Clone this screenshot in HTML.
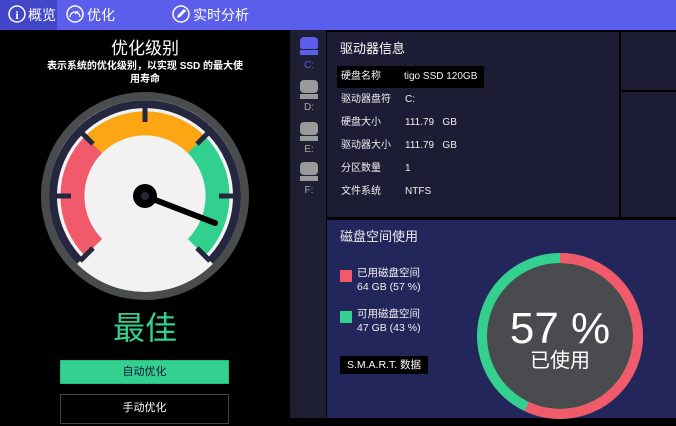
<!DOCTYPE html>
<html><head><meta charset="utf-8"><style>
*{margin:0;padding:0;box-sizing:border-box}
body{width:676px;height:418px;overflow:hidden;background:#000;font-family:"Liberation Sans","Noto Sans CJK SC",sans-serif;color:#fff;position:relative}
.a{position:absolute;white-space:nowrap}
.top{left:0;top:0;width:676px;height:30px;background:#5a5eea}
.nav{font-size:14px;top:6px;line-height:18px}
.lbl{font-size:10px;color:#f0f0f0;line-height:14px}
</style></head><body>
<div class="a top"></div>
<div class="a" style="left:0;top:0;width:57px;height:30px;background:#4246c8"></div>
<svg class="a" style="left:0;top:0" width="300" height="30">
<g fill="none" stroke="#fff" stroke-width="1.5">
<circle cx="17" cy="14" r="8"/><circle cx="75" cy="14" r="8"/><circle cx="181" cy="14" r="8"/></g>
<text x="17" y="19" fill="#fff" font-size="12" font-weight="bold" text-anchor="middle" font-family="Liberation Serif">i</text>
<path d="M70 17 A5 5 0 0 1 80 17 M75 14 L78 11" stroke="#fff" stroke-width="1.3" fill="none"/>
<path d="M177 18 L178 15 L184 9 L186 11 L180 17 Z" fill="#fff"/>
</svg>
<div class="a nav" style="left:28px">概览</div>
<div class="a nav" style="left:87px">优化</div>
<div class="a nav" style="left:193px">实时分析</div>

<div class="a" style="left:0;top:38px;width:290px;text-align:center;font-size:17px;line-height:22px">优化级别</div>
<div class="a" style="left:45px;top:60px;width:200px;text-align:center;font-size:10px;font-weight:bold;white-space:normal;line-height:13px">表示系统的优化级别，以实现 SSD 的最大使用寿命</div>

<svg class="a" style="left:0;top:0" width="290" height="418">
<circle cx="145" cy="196" r="104" fill="#4a4b4d"/>
<circle cx="145" cy="196" r="96" fill="#f2f2f2"/>
<g fill="none">
<path d="M79.9 261.1 A92 92 0 1 1 210.1 261.1" stroke="#25273f" stroke-width="8"/>
<path d="M93.6 247.4 A73 73 0 0 1 93.6 144.6" stroke="#f05a6a" stroke-width="24"/>
<path d="M93.6 144.6 A73 73 0 0 1 196.4 144.6" stroke="#fca613" stroke-width="24"/>
<path d="M196.4 144.6 A73 73 0 0 1 196.4 247.4" stroke="#32d08f" stroke-width="24"/>
</g>
<g stroke="#25273f" stroke-width="5">
<line x1="145" y1="104" x2="145" y2="122"/>
<line x1="80" y1="131" x2="93" y2="144"/>
<line x1="210" y1="131" x2="197" y2="144"/>
<line x1="53" y1="196" x2="71" y2="196"/>
<line x1="237" y1="196" x2="219" y2="196"/>
<line x1="80" y1="261" x2="93" y2="248"/>
<line x1="210" y1="261" x2="197" y2="248"/>
</g>
<line x1="145" y1="196" x2="215" y2="223" stroke="#000" stroke-width="6" stroke-linecap="round"/>
<circle cx="145" cy="196" r="12" fill="#000"/>
<circle cx="145" cy="196" r="4" fill="#25273f"/>
</svg>
<div class="a" style="left:0;top:307px;width:290px;text-align:center;font-size:32px;line-height:42px;color:#33d08f">最佳</div>
<div class="a" style="left:60px;top:360px;width:169px;height:24px;background:#33d08f;border:1px dotted #1a6;color:#113;font-size:11px;text-align:center;line-height:22px">自动优化</div>
<div class="a" style="left:60px;top:394px;width:169px;height:30px;background:#000;border:1px solid #444;font-size:11px;text-align:center;line-height:26px">手动优化</div>

<div class="a" style="left:290px;top:30px;width:36px;height:388px;background:#1e1f33"></div>
<svg class="a" style="left:290px;top:30px" width="36" height="180">
<g fill="#5a5eea"><rect x="10" y="7" width="18" height="13" rx="4"/><rect x="10" y="19" width="18" height="6"/></g>
<line x1="10" y1="19.5" x2="28" y2="19.5" stroke="#1e1f33"/>
<g fill="#9a9a9a"><rect x="10" y="50" width="18" height="13" rx="4"/><rect x="10" y="63" width="18" height="6"/>
<rect x="10" y="92" width="18" height="13" rx="4"/><rect x="10" y="105" width="18" height="6"/>
<rect x="10" y="132" width="18" height="13" rx="4"/><rect x="10" y="145" width="18" height="6"/></g>
<g stroke="#1e1f33"><line x1="10" y1="63.5" x2="28" y2="63.5"/><line x1="10" y1="105.5" x2="28" y2="105.5"/><line x1="10" y1="145.5" x2="28" y2="145.5"/></g>
<text x="19" y="38" font-size="10" fill="#5a5eea" text-anchor="middle">C:</text>
<text x="19" y="80" font-size="10" fill="#aaa" text-anchor="middle">D:</text>
<text x="19" y="122" font-size="10" fill="#aaa" text-anchor="middle">E:</text>
<text x="19" y="163" font-size="10" fill="#aaa" text-anchor="middle">F:</text>
</svg>

<div class="a" style="left:327px;top:32px;width:292px;height:185px;background:#1c1d35"></div>
<div class="a" style="left:621px;top:32px;width:55px;height:58px;background:#1c1d35"></div>
<div class="a" style="left:621px;top:92px;width:55px;height:125px;background:#1c1d35"></div>
<div class="a" style="left:340px;top:40px;font-size:13px;line-height:18px">驱动器信息</div>
<div class="a" style="left:337px;top:66px;width:147px;height:22px;background:#000"></div>
<div class="a lbl" style="left:341px;top:70px">硬盘名称</div><div class="a lbl" style="left:404px;top:70px">tigo SSD 120GB</div>
<div class="a lbl" style="left:341px;top:93px">驱动器盘符</div><div class="a lbl" style="left:405px;top:93px">C:</div>
<div class="a lbl" style="left:341px;top:116px">硬盘大小</div><div class="a lbl" style="left:405px;top:116px">111.79&nbsp;&nbsp;&nbsp;GB</div>
<div class="a lbl" style="left:341px;top:139px">驱动器大小</div><div class="a lbl" style="left:405px;top:139px">111.79&nbsp;&nbsp;&nbsp;GB</div>
<div class="a lbl" style="left:341px;top:162px">分区数量</div><div class="a lbl" style="left:405px;top:162px">1</div>
<div class="a lbl" style="left:341px;top:185px">文件系统</div><div class="a lbl" style="left:405px;top:185px">NTFS</div>

<div class="a" style="left:327px;top:220px;width:349px;height:198px;background:#23265a"></div>
<div class="a" style="left:340px;top:228px;font-size:13px;line-height:18px;color:#eee">磁盘空间使用</div>
<div class="a" style="left:340px;top:270px;width:12px;height:12px;background:#f05a6a"></div>
<div class="a lbl" style="left:357px;top:266px;line-height:14px;font-size:10.5px">已用磁盘空间<br>64 GB (57 %)</div>
<div class="a" style="left:340px;top:311px;width:12px;height:12px;background:#33d08f"></div>
<div class="a lbl" style="left:357px;top:307px;line-height:14px;font-size:10.5px">可用磁盘空间<br>47 GB (43 %)</div>
<div class="a" style="left:340px;top:356px;width:88px;height:18px;background:#000;font-size:10.5px;text-align:center;line-height:18px">S.M.A.R.T. 数据</div>
<svg class="a" style="left:470px;top:246px" width="180" height="180">
<circle cx="90" cy="90" r="83" fill="#4a4b4e"/>
<circle cx="90" cy="90" r="78" fill="none" stroke="#33d08f" stroke-width="10"/>
<circle cx="90" cy="90" r="78" fill="none" stroke="#f05a6a" stroke-width="10" stroke-dasharray="279.3 500" transform="rotate(-90 90 90)"/>
</svg>
<div class="a" style="left:480px;top:305px;width:160px;text-align:center;font-size:44px;line-height:48px">57 %</div>
<div class="a" style="left:480px;top:348px;width:160px;text-align:center;font-size:20px;line-height:26px">已使用</div>
</body></html>
